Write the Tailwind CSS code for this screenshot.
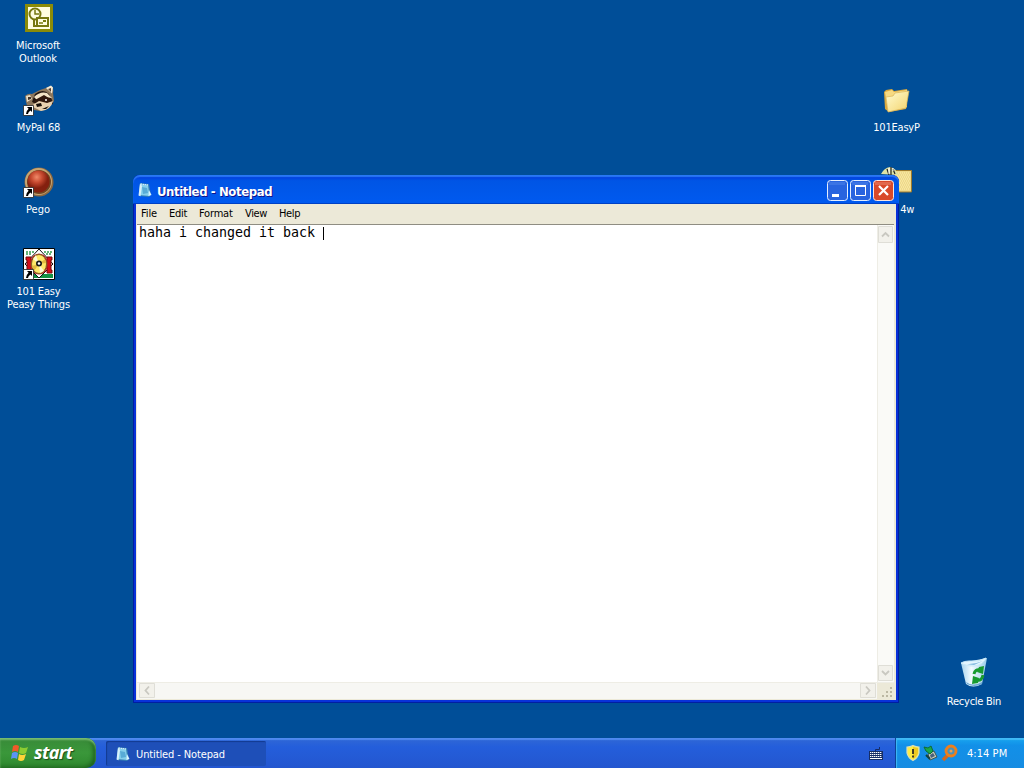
<!DOCTYPE html>
<html lang="en">
<head>
<meta charset="utf-8">
<title>Desktop</title>
<script src="https://cdn.jsdelivr.net/npm/@tailwindcss/browser@4"></script>
</head>
<body class="relative flex h-[768px] w-[1024px] flex-col overflow-hidden bg-[#004e98] font-['DejaVu_Sans_Condensed','Noto_Sans',sans-serif] text-[11px] leading-[13px] text-black">
<svg width="0" height="0" class="absolute">
  <defs>
    <symbol id="shortcut" viewBox="0 0 11 11"><path d="M.5.5h10v10H.5z" fill="#fff" stroke="#222" stroke-width=".8"/><path d="M4 2h5v5L7.500 5.500Q5 7 5 9H3Q3 6 5.600 3.700z" fill="#000"/></symbol>
    <symbol id="note" viewBox="0 0 16 16"><path d="M3 1l9 1 2 11-2 2-10-1z" fill="#347eb4"/><path d="M3 1.500l8 1 1.500 11.500-10.500-1z" fill="#86cfeb"/><path d="M3 1.500L1.500 13.500l2 .8L5 4z" fill="#d7f1fb"/><path d="M5 5l5 1 1 5-5 1z" fill="#58abd6"/><path d="M4 2l7 1" stroke="#eef" stroke-dasharray="1 1"/><path d="M12 8l2.500 5-3 1z" fill="#d8f4ff"/></symbol>
    <linearGradient id="fold" x2="1" y2="1"><stop stop-color="#fffcd2"/><stop offset="1" stop-color="#f3d36c"/></linearGradient>
    <radialGradient id="red" cx=".42" cy=".3"><stop stop-color="#f08a69"/><stop offset=".5" stop-color="#c74a30"/><stop offset="1" stop-color="#84200f"/></radialGradient>
    <linearGradient id="bin" x2="1"><stop stop-color="#a7d3ee"/><stop offset=".4" stop-color="#f2fbff"/><stop offset="1" stop-color="#9bcbea"/></linearGradient>
  </defs>
</svg>

<main class="relative flex-1 text-center text-white">
  <div class="absolute left-0 top-[3px] flex w-[76px] flex-col items-center">
    <svg width="30" height="30" viewBox="0 0 30 30" class="ml-[2px]"><path d="M1 1h28v28H1z" fill="#8b8b08"/><path d="M4 4h22v22H4z" fill="#fffde0"/><path d="M10 16v7h4" fill="none" stroke="#77780f" stroke-width="2"/><circle cx="11" cy="11" r="5.500" fill="#fffde0" stroke="#77780f" stroke-width="2"/><path d="M11 7v4h4" fill="none" stroke="#77780f" stroke-width="1.500"/><path d="M13 15h11v8H13z" fill="#fffde0" stroke="#77780f" stroke-width="2"/><path d="M15 20h4" stroke="#77780f" stroke-width="1.500"/><path d="M19 17h3v2h-3z" fill="#77780f"/></svg>
    <span class="mt-[6px] tracking-[-0.1px]">Microsoft<br>Outlook</span>
  </div>
  <div class="absolute left-0 top-[84px] flex w-[77px] flex-col items-center">
    <svg width="32" height="32" viewBox="0 0 32 32"><path d="M2 12Q5 9 9 10L17 6 23 4 28 2Q31 4 30 9L31 17Q26 26 17 27L5 25 3 18z" fill="#8c765b"/><path d="M23 4l5-2.500 2 2-1 6z" fill="#f5ead4"/><path d="M25 5l3-1 0 4z" fill="#57402f"/><path d="M3 12l4-1 2 4-5 3z" fill="#e7dcc4"/><path d="M5 13l3 0v2l-3 1z" fill="#423328"/><path d="M12 10q8-6 14 0l3 6-7-1-8 5-5-2z" fill="#21150e"/><path d="M11 13q6-6 13-4l5 5-8-1-7 3z" fill="#f3e4c7"/><path d="M12 16l9-5 8 5 1 4-6 2-8-5-6 2z" fill="#30180d"/><path d="M8 22l8-5 8 2 6-2q-2 9-12 10z" fill="#e8d1b0"/><circle cx="23" cy="16" r="1" fill="#fff"/><path d="M13 20l5-1 1 3-5 1zM19 25l7-3-3 3z" fill="#160e09"/><use href="#shortcut" x="0" y="21" width="11" height="11"/></svg>
    <span class="mt-[5px] tracking-[-0.1px]">MyPal 68</span>
  </div>
  <div class="absolute left-0 top-[166px] flex w-[76px] flex-col items-center">
    <svg width="32" height="32" viewBox="0 0 32 32" class="ml-px"><circle cx="16" cy="16" r="14.500" fill="#8c6840"/><circle cx="15.500" cy="15.500" r="13.500" fill="#c6a573"/><circle cx="16" cy="16" r="12" fill="#704522"/><circle cx="15.500" cy="15.500" r="11" fill="url(#red)"/><use href="#shortcut" x="0" y="21" width="11" height="11"/></svg>
    <span class="mt-[5px] tracking-[-0.05px]">Pego</span>
  </div>
  <div class="absolute left-0 top-[248px] flex w-[77px] flex-col items-center">
    <svg width="32" height="32" viewBox="0 0 32 32" class="ml-px"><path d="M.5.5h31v31H.5z" fill="#fff" stroke="#000"/><path d="M3 4h8M21 4h8M3 6h6M23 6h6" stroke="#329c4d" stroke-dasharray="2 1" stroke-width="1.500"/><path d="M5 26h25v4H5z" fill="#129344"/><path d="M16 1l14 15-14 14L2 16z" fill="#fff" stroke="#111"/><path d="M3 9h5v16H3v-3h1V12H3zM24 9h5v3h-1v10h1v3h-5z" fill="#d40d18" stroke="#710b0b"/><ellipse cx="16" cy="16" rx="9" ry="10.500" fill="#b92420"/><ellipse cx="16" cy="16" rx="7.500" ry="9.500" fill="#ffe867" stroke="#806221"/><path d="M16 16l-6-5 3-4zM16 16l5 7-4 2z" fill="#fff9d6"/><path d="M16 16l-7 2 2 5zM16 16l6-5 1 4z" fill="#e2ba40"/><circle cx="16" cy="15.500" r="3" fill="#191919"/><circle cx="16" cy="15.500" r="1.300" fill="#fff"/><use href="#shortcut" x="0" y="21" width="11" height="11"/></svg>
    <span class="mt-[5px] whitespace-nowrap tracking-[-0.15px]">101 Easy<br>Peasy Things</span>
  </div>
  <div class="absolute left-[858px] top-[84px] flex w-[77px] flex-col items-center">
    <svg width="32" height="32" viewBox="0 0 32 32" class="-ml-px"><path d="M4 8l2-2 6-1 2 2 13-2 1 4-2 16L9 28 5 25z" fill="#daa83d"/><path d="M5 8l7-2 2 2 13-2v17L8 27z" fill="#f7da82"/><path d="M6 13l7-1 2-3 14-2-3 17L8 28z" fill="url(#fold)" stroke="#d9b45a" stroke-width=".7"/></svg>
    <span class="mt-[5px] tracking-[-0.2px]">101EasyP</span>
  </div>
  <div class="absolute left-[880px] top-[165px] flex w-[34px] flex-col items-end">
    <svg width="34" height="32" viewBox="0 0 34 32"><path d="M14 5.500h17.500V27H14z" fill="#eed98b" stroke="#9c792d"/><path d="M18 8h12M17 10h13M18 12h12M17 14h13M18 16h12M17 18h13M18 20h12M17 22h13M18 24h12" stroke="#fff2b4" stroke-dasharray="1 1"/><path d="M1 9q3-6 9-7 6 1 8 8z" fill="#dfe3a5"/><path d="M7 4l2 6M11 2v8M13 4l2 5" stroke="#222" stroke-width="1.200"/><path d="M9 3v6M13 3v3" stroke="#fff"/></svg>
    <span class="mt-[6px] tracking-[-0.3px]">4w</span>
  </div>
  <div class="absolute left-[935px] top-[656px] flex w-[78px] flex-col items-center">
    <svg width="32" height="34" viewBox="0 0 32 34"><path d="M3 7l5 21q7 5 16 0l5-26z" fill="url(#bin)"/><path d="M3 7q3-2 8-2l9 0 8-3q-3 7-12 8Q7 10 3 7z" fill="#e3f5ff" stroke="#c8e8f8"/><path d="M6 8q9 1 19-3l-9 4z" fill="#83bbdf"/><path d="M8 26q7 5 16 0v2q-8 4-15 0z" fill="#6ba9d4"/><g fill="none" stroke="#189b30" stroke-width="3"><path d="M16 18q1-5 6-4"/><path d="M25 19q-1 6-6 5"/></g><path d="M21 11l5-1-1 8-6-2zM20 27l-6 1 1-8 6 2z" fill="#189b30"/></svg>
    <span class="mt-[5px] tracking-[-0.25px]">Recycle Bin</span>
  </div>

  <section class="absolute left-[133px] top-[175px] flex h-[528px] w-[766px] flex-col rounded-t-[7px] bg-[#0831d9] pb-[3px] text-left text-black shadow-[inset_-1px_-1px_#001ea0,inset_1px_0_#001ea0]">
    <header class="flex h-[29px] items-center rounded-t-[7px] bg-linear-to-b from-[#0831d9] via-[#0055e5] via-20% to-[#005af0] pl-[4px] pr-[5px] shadow-[inset_0_2px_1px_#2877f4,inset_0_-1px_#0041c4]">
      <svg width="16" height="16" class="mt-px"><use href="#note"/></svg>
      <h1 class="ml-[4px] mt-[4px] flex-1 text-[13px] font-bold leading-4 tracking-[-0.4px] text-white [text-shadow:1px_1px_#0f1089]">Untitled - Notepad</h1>
      <div class="mt-[2px] flex gap-[2px]">
        <svg width="21" height="21" viewBox="0 0 21 21"><rect x=".5" y=".5" width="20" height="20" rx="3" fill="#2864df" stroke="#e5efff"/><path d="M2 2h16v3H2z" fill="#6c9bf1" opacity=".3"/><path d="M5 14h7v3H5z" fill="#fff"/></svg>
        <svg width="21" height="21" viewBox="0 0 21 21"><rect x=".5" y=".5" width="20" height="20" rx="3" fill="#2864df" stroke="#e5efff"/><path d="M2 2h16v3H2z" fill="#6c9bf1" opacity=".3"/><path d="M5.500 5.500h10v10h-10z" fill="none" stroke="#fff"/><path d="M5 6h11" stroke="#fff" stroke-width="2"/></svg>
        <svg width="21" height="21" viewBox="0 0 21 21"><rect x=".5" y=".5" width="20" height="20" rx="3" fill="#d9492a" stroke="#fbe5df"/><path d="M2 2h16v3H2z" fill="#ee9b83" opacity=".4"/><path d="M6 6l9 9M15 6l-9 9" stroke="#fff" stroke-width="2.200"/></svg>
      </div>
    </header>
    <div class="mx-[3px] flex flex-1 flex-col border-b border-l border-r-2 border-[#ece9d8] bg-white">
      <nav class="flex h-[20px] items-center bg-[#ece9d8] pl-[4px] leading-4">
        <span class="w-[28px] tracking-[-0.1px]">File</span><span class="w-[30px] tracking-[-0.25px]">Edit</span><span class="w-[46px] tracking-[-0.2px]">Format</span><span class="w-[34px] tracking-[-0.4px]">View</span><span class="tracking-[-0.35px]">Help</span>
      </nav>
      <div class="flex flex-1 border-t border-[#8f8d82]">
        <div class="flex flex-1 items-start pl-[2px] font-['DejaVu_Sans_Mono',monospace] text-[13.3px] leading-[15px]"><span class="whitespace-pre">haha i changed it back </span><span class="mt-[2px] h-[13px] w-px bg-black"></span></div>
        <div class="flex w-[17px] flex-col justify-between border-l border-[#eeede5] bg-[#fafaf7]">
          <svg width="16" height="18" viewBox="0 0 16 18"><path d="M.5 1.500h14v16H.5z" fill="#f2f1eb" stroke="#dfded7"/><path d="M4 11.500L7.500 8l3.500 3.500" fill="none" stroke="#c9c8c1" stroke-width="1.800"/></svg>
          <svg width="16" height="17" viewBox="0 0 16 17"><path d="M.5.500h14v15H.5z" fill="#f2f1eb" stroke="#dfded7"/><path d="M4 6l3.500 3.500L11 6" fill="none" stroke="#c9c8c1" stroke-width="1.800"/></svg>
        </div>
      </div>
      <div class="flex h-[17px] border-t border-[#eeede5] bg-[#f7f7f4]">
        <svg width="19" height="16" viewBox="0 0 19 16"><path d="M2.500.5h15v14h-15z" fill="#f2f1eb" stroke="#dfded7"/><path d="M12 3.500L8.500 7.500l3.500 4" fill="none" stroke="#c9c8c1" stroke-width="1.800"/></svg>
        <div class="flex-1"></div>
        <svg width="17" height="16" viewBox="0 0 17 16"><path d="M.5.500h15v14H.5z" fill="#f2f1eb" stroke="#dfded7"/><path d="M6 3.500l3.500 4L6 11.500" fill="none" stroke="#c9c8c1" stroke-width="1.800"/></svg>
        <svg width="17" height="16" viewBox="0 0 17 16"><path d="M0 0h17v16H0z" fill="#ece9d8"/><path d="M13 4h2v2h-2zM9 8h2v2H9zM13 8h2v2h-2zM5 12h2v2H5zM9 12h2v2H9zM13 12h2v2h-2z" fill="#bbb7a2"/></svg>
      </div>
    </div>
  </section>
</main>

<footer class="flex h-[30px] items-stretch bg-linear-to-b from-[#3168d5] via-[#245edb] via-30% to-[#2356cf] text-white shadow-[inset_0_2px_1px_#4f8af0]">
  <button class="flex w-[96px] items-center rounded-r-[10px] bg-linear-to-b from-[#388a38] via-[#3a973a] to-[#2e882e] pl-[10px] shadow-[inset_0_2px_2px_#79bd72,inset_-3px_-1px_4px_#1d621d]">
    <svg width="20" height="20" viewBox="0 0 20 20" class="-mt-px"><path d="M3 3q3-2 6 0L8 9Q5 7 2 9z" fill="#ef5a2a"/><path d="M10 4q4 2 8 0l-2 6q-3 2-7 0z" fill="#8ccc32"/><path d="M2 10q3-2 6 0l-1 6q-3-2-6 0z" fill="#5b94f4"/><path d="M9 11q3 2 7 0l-2 6q-3 2-6 0z" fill="#ffd338"/></svg>
    <span class="ml-[4px] mt-[-2px] font-['Open_Sans',sans-serif] text-[18px] font-bold italic leading-5 tracking-[-0.6px] [text-shadow:1px_1px_1px_#184a18]">start</span>
  </button>
  <button class="mb-[2px] ml-[10px] mt-[3px] flex w-[160px] items-center rounded-[2px] bg-[#1e4fb8] pl-[9px] text-left shadow-[inset_1px_1px_1px_#123a91]">
    <svg width="16" height="16"><use href="#note"/></svg><span class="ml-[5px] mt-px tracking-[-0.12px]">Untitled - Notepad</span>
  </button>
  <div class="flex-1"></div>
  <svg width="14" height="14" viewBox="0 0 14 14" class="mr-[12px] mt-[9px]"><path d="M6.500 5V2.500h4V0" fill="none" stroke="#142b65"/><path d="M0 4h14v9H0z" fill="#152d66"/><path d="M1 5.500h12M1 7.500h12M1 9.500h12" stroke="#fff" stroke-dasharray="1.400 .6"/><path d="M1 11.500h12" stroke="#fff"/></svg>
  <div class="flex w-[129px] items-center border-l border-[#0c4396] bg-linear-to-b from-[#19a6ef] via-[#1290e8] via-25% to-[#168ce2] pl-[9px] shadow-[inset_1px_2px_1px_#40baf5]">
    <svg width="17" height="18" viewBox="0 0 17 18"><path d="M8 1.500Q11 3 14 3v6q-1 5-6 7.500Q3 14 2 9V3Q5 3 8 1.500z" fill="#ffec43" stroke="#d9dfba" stroke-width="1.200"/><path d="M8 3v12q5-3 5-7V4z" fill="#edc920"/><path d="M8 5v5M8 11.500v2" stroke="#222" stroke-width="1.700"/></svg>
    <svg width="16" height="18" viewBox="0 0 16 18" class="ml-px"><path d="M5 10l6-3 3 6-7 3z" fill="#c9cdbd" stroke="#3d5550"/><path d="M7 11l3-2 2 3-4 2z" fill="#49617b"/><path d="M1 3l4 1 3-2 2 5-3 3-4-3z" fill="#1ba848" stroke="#0e6c38"/><path d="M3 11l4 4" stroke="#163f38" stroke-width="2"/></svg>
    <svg width="18" height="18" viewBox="0 0 18 18" class="ml-[2px]"><path d="M7 11l-5 5" stroke="#d2691e" stroke-width="3.500"/><circle cx="10" cy="7" r="5" fill="#4b91b8" stroke="#ed7f1c" stroke-width="2.800"/><circle cx="10" cy="7" r="1.500" fill="#e9a154"/></svg>
    <span class="ml-[8px] whitespace-nowrap tracking-[0.05px]">4:14 PM</span>
  </div>
</footer>
</body>
</html>
